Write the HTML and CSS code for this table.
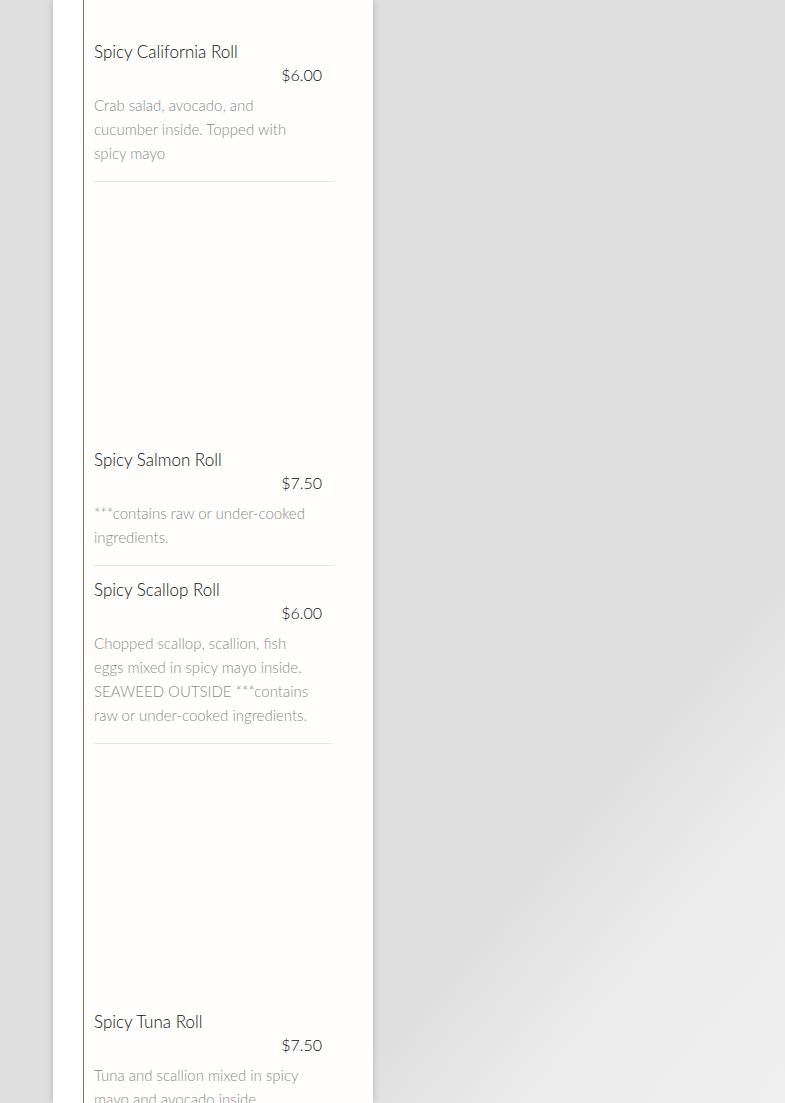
FILE: index.html
```html
<!DOCTYPE html>
<html lang="en">

<head>
    <meta charset="UTF-8">
    <title>Sushi Rolls</title>
<link rel="stylesheet" href="styles.css">
</head>
<body>
<div class="page">
    <div class="panel">
        <div class="menu">
            <div class="item">
                <h3>Spicy California Roll</h3>
                <p class="price">$6.00</p>
                <p class="desc">Crab salad, avocado, and cucumber inside. Topped with spicy mayo</p>
            </div>
            <div class="item">
                <div class="photo"></div>
                <h3>Spicy Salmon Roll</h3>
                <p class="price">$7.50</p>
                <p class="desc">***contains raw or under-cooked ingredients.</p>
            </div>
            <div class="item">
                <h3>Spicy Scallop Roll</h3>
                <p class="price">$6.00</p>
                <p class="desc">Chopped scallop, scallion, fish eggs mixed in spicy mayo inside. SEAWEED OUTSIDE ***contains raw or under-cooked ingredients.</p>
            </div>
            <div class="item">
                <div class="photo"></div>
                <h3>Spicy Tuna Roll</h3>
                <p class="price">$7.50</p>
                <p class="desc">Tuna and scallion mixed in spicy mayo and avocado inside.</p>
            </div>
        </div>
    </div>
</div>
</body>

</html>
```

FILE: styles.css
```css
html, body{
margin: 0;
height: 100%;
overflow: hidden;
}
body{
font-family: Lato, "Liberation Sans", sans-serif;
background: linear-gradient(130deg, #dedede 0%, #dedede 73%, #ededed 86%, #efefef 100%);
}
.page{
display: flex;
height: 100%;
}
.panel{
width: 320px;
margin-left: 53px;
background-color: #fff;
box-shadow: 0 0 7px rgba(0, 0, 0, 0.18);
}
.menu{
margin-left: 30px;
height: 100%;
padding: 28px 40px 0 10px;
border-left: 1px solid #8c6d5f;
background-color: #fffefc;
}
.item{
padding: 12px 0 16px;
border-bottom: 1px solid #e5e5e5;
}
.photo{
height: 254px;
}
.item h3{
margin: 0;
font-size: 17px;
font-weight: 300;
line-height: 24px;
color: #111;
}
.price{
margin: 0;
padding-right: 11px;
text-align: right;
font-size: 16px;
font-weight: 300;
line-height: 22px;
color: #111;
}
.desc{
margin: 7px 0 0;
max-width: 220px;
font-size: 15px;
font-weight: 300;
line-height: 24px;
color: #8c8c8c;
}
```
